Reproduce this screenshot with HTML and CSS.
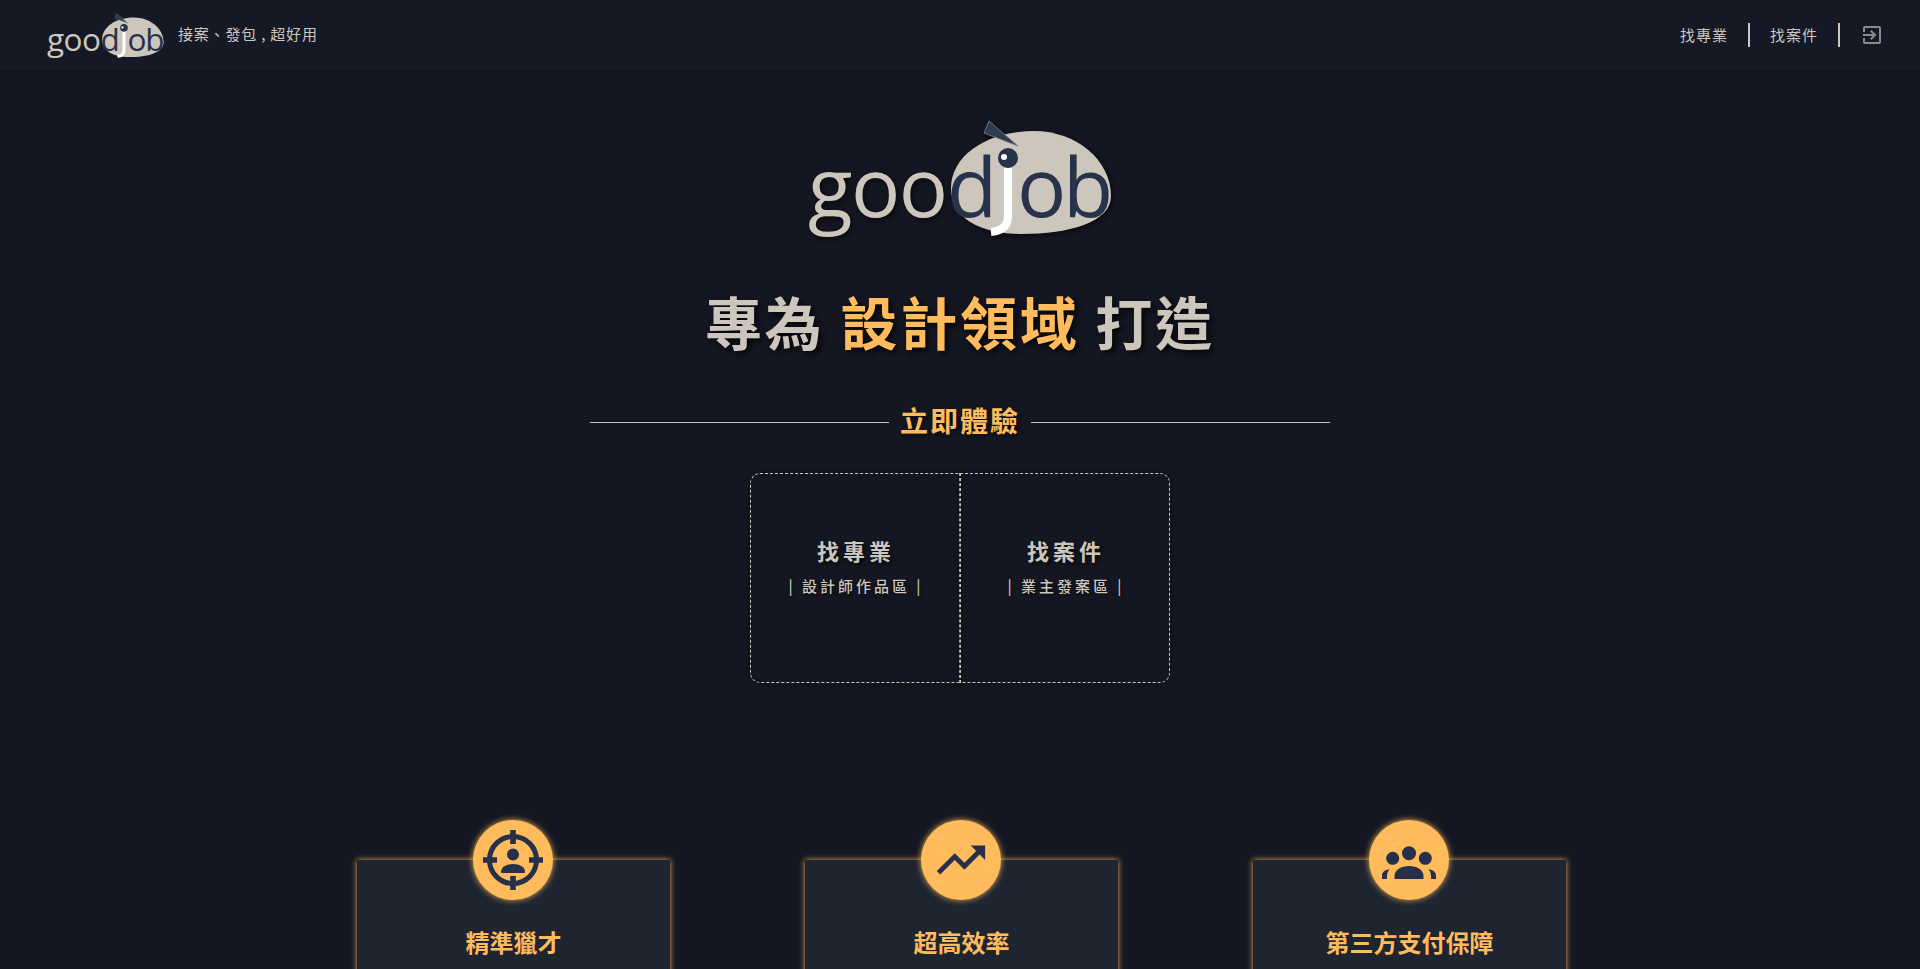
FILE: index.html
```html
<!DOCTYPE html>
<html lang="zh-Hant">
<head>
  <meta charset="UTF-8">
  <meta name="viewport" content="width=device-width, initial-scale=1.0">
  <title>goodjob</title>
  <link rel="stylesheet" href="styles.css">
</head>
<body>
  <div class="page">
    <header class="navbar">
      <div class="brand">
        <svg class="brand-logo" viewBox="0 0 304 116">
          <path class="logo-blob" d="M143 68C143 35 180 11 226 11C268 11 303 40 303 76C303 102 262 114 213 114C172 114 143 98 143 68Z"/>
          <path class="logo-hat" d="M181 1L210 26L176 13Z"/>
          <text class="logo-text logo-goo" x="0" y="97">goo</text>
          <text class="logo-text logo-job" x="139" y="97">d</text>
          <path class="logo-j" d="M200 48V96C200 106 194 111 183 112"/>
          <circle class="logo-job" cx="200" cy="38" r="10"/>
          <circle class="logo-eye" cx="196" cy="37" r="3"/>
          <text class="logo-text logo-job" x="209" y="97">o</text>
          <text class="logo-text logo-job" x="255" y="97">b</text>
        </svg>
        <span class="tagline">接案、發包 , 超好用</span>
      </div>
      <nav class="nav-links">
        <a class="nav-link" href="#">找專業</a>
        <a class="nav-link" href="#">找案件</a>
        <a class="nav-icon" href="#" aria-label="登入">
          <svg viewBox="0 0 24 24" width="24" height="24"><path d="M10.09 15.59L11.5 17l5-5-5-5-1.41 1.41L12.67 11H3v2h9.67l-2.58 2.59zM19 3H5c-1.11 0-2 .9-2 2v4h2V5h14v14H5v-4H3v4c0 1.1.89 2 2 2h14c1.1 0 2-.9 2-2V5c0-1.1-.9-2-2-2z"/></svg>
        </a>
      </nav>
    </header>

    <main class="hero">
      <svg class="hero-logo" viewBox="0 0 304 116">
        <path class="logo-blob" d="M143 68C143 35 180 11 226 11C268 11 303 40 303 76C303 102 262 114 213 114C172 114 143 98 143 68Z"/>
        <path class="logo-hat" d="M181 1L210 26L176 13Z"/>
        <text class="logo-text logo-goo" x="0" y="97">goo</text>
        <text class="logo-text logo-job" x="139" y="97">d</text>
        <path class="logo-j" d="M200 48V96C200 106 194 111 183 112"/>
        <circle class="logo-job" cx="200" cy="38" r="10"/>
        <circle class="logo-eye" cx="196" cy="37" r="3"/>
        <text class="logo-text logo-job" x="209" y="97">o</text>
        <text class="logo-text logo-job" x="255" y="97">b</text>
      </svg>
      <h1 class="headline">專為 <span class="accent">設計領域</span> 打造</h1>

      <div class="try-title">
        <span class="try-line"></span>
        <h2>立即體驗</h2>
        <span class="try-line"></span>
      </div>

      <div class="entry-box">
        <a class="entry" href="#">
          <strong>找專業</strong>
          <span>| 設計師作品區 |</span>
        </a>
        <a class="entry" href="#">
          <strong>找案件</strong>
          <span>| 業主發案區 |</span>
        </a>
      </div>

      <section class="features">
        <article class="card">
          <div class="card-icon">
            <svg viewBox="0 0 62 62" width="62" height="62">
              <circle class="ring" cx="31" cy="31" r="23.5"/>
              <path d="M28.2 1h5.6v14h-5.6zM28.2 47h5.6v14h-5.6zM1 28.2h14v5.6H1zM47 28.2h14v5.6H47z"/>
              <circle cx="31" cy="25.5" r="6"/>
              <path d="M19 43c0-5 5-8 12-8s12 3 12 8c0 .6-.4 1-1 1H20c-.6 0-1-.4-1-1z"/>
            </svg>
          </div>
          <h3>精準獵才</h3>
        </article>
        <article class="card">
          <div class="card-icon">
            <svg viewBox="0 0 24 24" width="58" height="58"><path d="M16 6l2.29 2.29-4.88 4.88-4-4L2 16.59 3.41 18l6-6 4 4 6.3-6.29L22 12V6z"/></svg>
          </div>
          <h3>超高效率</h3>
        </article>
        <article class="card">
          <div class="card-icon">
            <svg viewBox="0 0 60 60" width="60" height="60">
              <circle cx="13.7" cy="28.3" r="6.5"/>
              <circle cx="46.3" cy="28.3" r="6.5"/>
              <circle class="head" cx="30" cy="23.3" r="8"/>
              <path d="M15.5 49v-3C15.5 40 22 36 30 36s14.5 4 14.5 10v3z"/>
              <path d="M3 49v-3.5C3 42 6 40 10.7 39 9 41 8 43.5 8 46v3zM57 49v-3.500c0-3.500-3-5.500-7.700-6.500 1.700 2 2.700 4.500 2.700 7v3z"/>
            </svg>
          </div>
          <h3>第三方支付保障</h3>
        </article>
      </section>
    </main>
  </div>
</body>
</html>
```

FILE: styles.css
```css
body {
  margin: 0;
  background-color: #141722;
  color: #cdc6bd;
  font-family: "Noto Sans CJK TC", "Noto Sans", sans-serif;
}

a {
  color: inherit;
  text-decoration: none;
}

.page {
  height: 100vh;
  overflow: hidden;
}

/* logo */
.brand-logo,
.hero-logo {
  overflow: visible;
}

.logo-blob {
  fill: #cdc6bd;
}

.logo-hat {
  fill: #2e3d4f;
  stroke: #7d838a;
  stroke-width: 0.8;
}

.logo-text {
  font-family: "Open Sans", sans-serif;
  font-size: 82px;
}

.logo-goo {
  fill: #cdc6bd;
  letter-spacing: -1.5px;
}

.logo-job {
  fill: #27334a;
}

.logo-j {
  fill: none;
  stroke: #fff;
  stroke-width: 8;
}

.logo-eye {
  fill: #fff;
}

/* navbar */
.navbar {
  display: flex;
  justify-content: space-between;
  align-items: center;
  height: 70px;
  padding: 0 36px 0 47px;
  background-color: #151825;
  box-shadow: 0 1px 3px rgba(0, 0, 0, 0.3);
}

.brand {
  display: flex;
  align-items: center;
  gap: 14px;
}

.brand-logo {
  width: 117px;
  height: 45px;
}

.tagline {
  font-size: 15px;
  letter-spacing: 0.8px;
  margin-top: -4px;
}

.nav-links {
  display: flex;
  align-items: center;
}

.nav-link {
  padding: 0 20px;
  border-right: 2px solid #cdc6bd;
  font-size: 15px;
  line-height: 24px;
  letter-spacing: 1px;
}

.nav-icon {
  display: flex;
  margin-left: 20px;
}

.nav-icon svg {
  fill: #8a8a8a;
}

/* hero */
.hero {
  display: flex;
  flex-direction: column;
  align-items: center;
}

.hero-logo {
  width: 304px;
  height: 116px;
  margin-top: 50px;
  filter: drop-shadow(2px 2px 3px rgba(0, 0, 0, 0.6));
}

.headline {
  margin: 54px 0 0;
  font-size: 57px;
  font-weight: 700;
  line-height: 60px;
  letter-spacing: 2.8px;
  text-shadow: 3px 3px 6px rgba(0, 0, 0, 0.8);
}

.accent,
.try-title h2 {
  color: #ffbb5c;
}

.try-title {
  display: flex;
  align-items: center;
  gap: 11px;
  margin-top: 52px;
}

.try-title h2 {
  margin: -2px 0 2px;
  font-size: 28px;
  font-weight: 700;
  line-height: 40px;
  letter-spacing: 2px;
  text-shadow: 2px 2px 4px rgba(0, 0, 0, 0.6);
}

.try-line {
  width: 299px;
  height: 1px;
  background-color: #cdc6bd;
}

.entry-box {
  display: flex;
  margin-top: 31px;
}

.entry {
  display: flex;
  flex-direction: column;
  align-items: center;
  box-sizing: border-box;
  width: 210px;
  height: 210px;
  padding: 61px 0 0 2px;
  border: 1px dashed #cdc6bd;
  box-shadow: 0 0 6px rgba(0, 0, 0, 0.4);
}

.entry:first-child {
  border-radius: 10px 0 0 10px;
}

.entry:last-child {
  border-radius: 0 10px 10px 0;
}

.entry strong {
  font-size: 22px;
  font-weight: 700;
  line-height: 30px;
  letter-spacing: 4px;
  text-shadow: 2px 2px 4px rgba(0, 0, 0, 0.7);
}

.entry span {
  margin-top: 11px;
  font-size: 15px;
  font-weight: 500;
  line-height: 20px;
  letter-spacing: 3px;
  text-shadow: 1px 1px 3px rgba(0, 0, 0, 0.7);
}

/* feature cards */
.features {
  display: flex;
  gap: 135px;
  margin: 177px 0 0 3px;
}

.card {
  position: relative;
  box-sizing: border-box;
  width: 313px;
  height: 320px;
  padding-top: 64px;
  background-color: #1e2530;
  box-shadow: 0 0 6px rgba(255, 187, 92, 0.9);
  text-align: center;
}

.card h3 {
  margin: 0;
  color: #ffbb5c;
  font-size: 24px;
  font-weight: 700;
  line-height: 36px;
}

.card-icon {
  position: absolute;
  top: -40px;
  left: 116px;
  display: flex;
  justify-content: center;
  align-items: center;
  width: 80px;
  height: 80px;
  border-radius: 50%;
  background-color: #ffbb5c;
  box-shadow: 0 0 6px rgba(255, 187, 92, 0.9);
}

.card-icon svg {
  fill: #27304a;
}

.card-icon .ring {
  fill: none;
  stroke: #27304a;
  stroke-width: 5;
}

.card-icon .head {
  stroke: #ffbb5c;
  stroke-width: 2;
}
```
